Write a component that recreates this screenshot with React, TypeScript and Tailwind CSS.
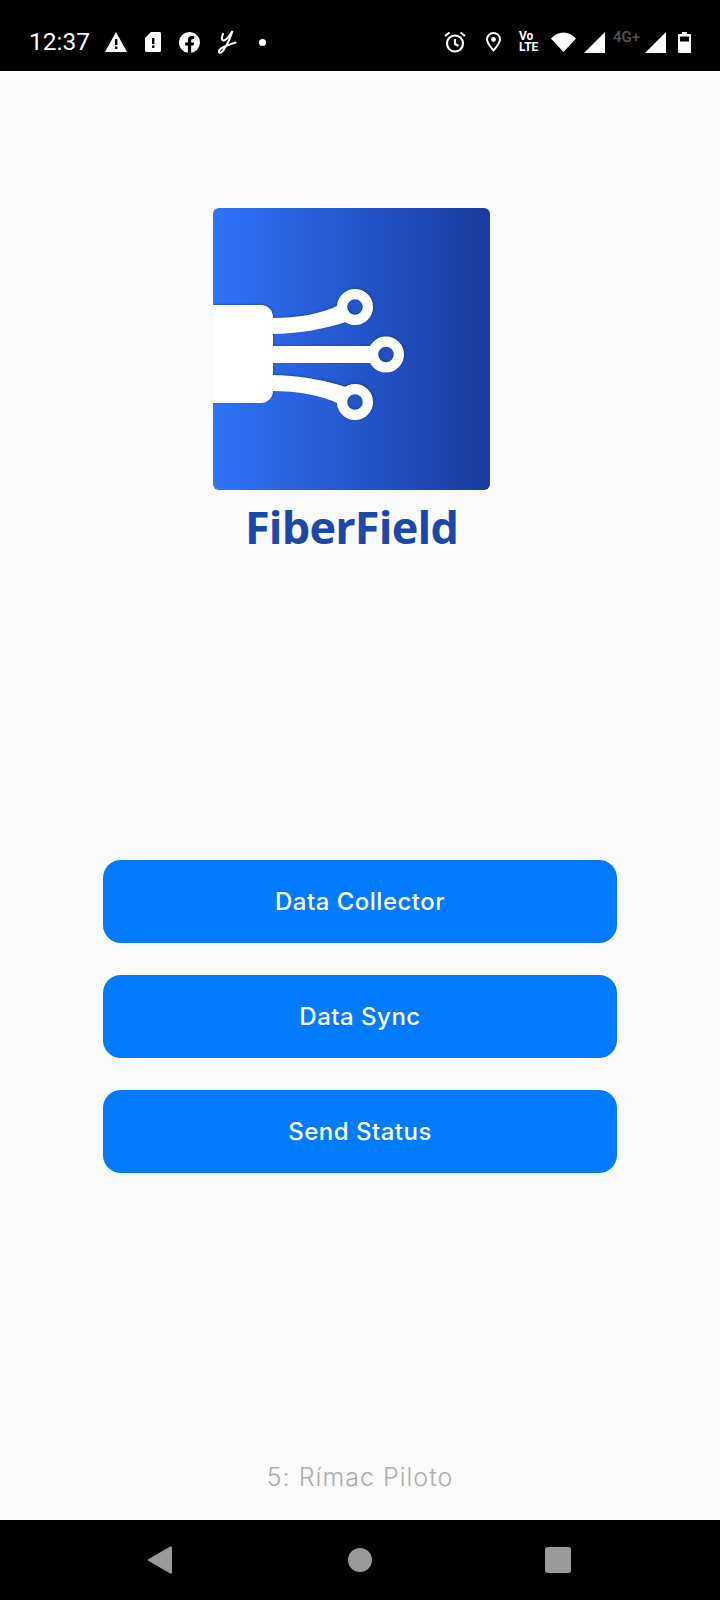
const buttons = ["Data Collector", "Data Sync", "Send Status"];

function WarningIcon() {
  return (
    <svg width="22" height="20" viewBox="0 0 22 20">
      <path d="M11 0 22 20H0Z" fill="#fff" />
      <rect x="10" y="7" width="2.4" height="6" fill="#000" />
      <rect x="10" y="14.5" width="2.4" height="2.4" fill="#000" />
    </svg>
  );
}

function SimIcon() {
  return (
    <svg width="16" height="20" viewBox="0 0 16 20">
      <path d="M6 0h8.5A1.5 1.5 0 0 1 16 1.5v17a1.5 1.5 0 0 1-1.500 1.500H1.500A1.500 1.500 0 0 1 0 18.500V6Z" fill="#fff" />
      <rect x="7" y="6" width="2.400" height="6" fill="#000" />
      <rect x="7" y="13.500" width="2.400" height="2.400" fill="#000" />
    </svg>
  );
}

function FacebookIcon() {
  return (
    <svg width="21" height="21" viewBox="0 0 22 22">
      <path
        d="M22 11a11 11 0 1 0-12.700 10.860v-7.680H6.500V11h2.800V8.600c0-2.760 1.640-4.280 4.150-4.280 1.200 0 2.460.21 2.460.21v2.700h-1.390c-1.360 0-1.790.85-1.790 1.720V11h3.050l-.49 3.180h-2.560v7.680A11 11 0 0 0 22 11Z"
        fill="#fff"
      />
    </svg>
  );
}

function ScriptIcon() {
  return (
    <svg width="20" height="26" viewBox="0 0 20 26" fill="none" stroke="#fff" strokeWidth="2" strokeLinecap="round">
      <path d="M6 5C4.500 8 4.500 12 7 11.500 10 11 13 6 15.500 2 13.500 9 10 16 7 20.500 5 24 1.500 25 2 22 2.500 19 10 16.500 18.500 13.500" />
    </svg>
  );
}

function AlarmIcon() {
  return (
    <svg width="22" height="22" viewBox="0 0 22 22" fill="none" stroke="#fff" strokeWidth="2.200">
      <circle cx="11" cy="12.500" r="8" />
      <path d="M11 8v5l3.500 2" />
      <path d="M1 5 5.500 1.500M21 5 16.500 1.500" />
    </svg>
  );
}

function LocationIcon() {
  return (
    <svg width="15" height="20" viewBox="0 0 15 20" fill="none" stroke="#fff" strokeWidth="2">
      <path d="M7.500 18.500C4 14 1 11 1 7.500a6.500 6.500 0 0 1 13 0c0 3.500-3 6.500-6.500 11Z" />
      <circle cx="7.500" cy="7.500" r="2.400" fill="#fff" stroke="none" />
    </svg>
  );
}

function WifiIcon() {
  return (
    <svg width="25" height="20" viewBox="0 0 25 20">
      <path d="M0 6.500C3.500 2.500 8 .5 12.500.5S21.500 2.500 25 6.500L12.500 20Z" fill="#fff" />
    </svg>
  );
}

function SignalIcon() {
  return (
    <svg width="21" height="21" viewBox="0 0 21 21">
      <path d="M21 0V21H0Z" fill="#fff" />
    </svg>
  );
}

function BatteryIcon() {
  return (
    <svg width="13" height="21" viewBox="0 0 13 21">
      <path d="M4 0h5v2h3a1 1 0 0 1 1 1v17a1 1 0 0 1-1 1H1a1 1 0 0 1-1-1V3a1 1 0 0 1 1-1h3Z" fill="#fff" />
      <rect x="2" y="4.500" width="9" height="5" fill="#000" />
    </svg>
  );
}

function LogoMark() {
  return (
    <svg width="277" height="282" viewBox="0 0 277 282" className="block drop-shadow-[1px_-1px_1px_rgba(10,20,80,0.3)]">
      <path d="M0 97H48a12 12 0 0 1 12 12V183a12 12 0 0 1-12 12H0Z" fill="#fff" />
      <path d="M58 110C85 110 108 106 126 97L133 114C112 121 85 126 58 126Z" fill="#fff" />
      <path d="M58 138H162V155H58Z" fill="#fff" />
      <path d="M58 183C85 183 108 187 126 196L133 179C112 172 85 167 58 167Z" fill="#fff" />
      <g fill="none" stroke="#fff" strokeWidth="10.300">
        <circle cx="142" cy="99" r="12.900" />
        <circle cx="173" cy="146.500" r="12.900" />
        <circle cx="142" cy="194" r="12.900" />
      </g>
    </svg>
  );
}

export default function App() {
  return (
    <div className="flex h-[1600px] w-[720px] flex-col bg-[#fafafa]">
      <div className="flex h-[71px] items-center justify-between bg-black pl-[29px] pr-[29px] pt-[13px]">
        <div className="flex items-center">
          <span className="w-[60px] font-['Roboto',sans-serif] text-[24.5px] leading-none text-white">12:37</span>
          <div className="ml-[16px] flex items-center gap-[18px]">
            <WarningIcon />
            <SimIcon />
            <FacebookIcon />
            <div className="-ml-[1px]">
              <ScriptIcon />
            </div>
          </div>
          <span className="ml-[22px] h-[7px] w-[7px] rounded-full bg-white" />
        </div>
        <div className="flex items-center">
          <AlarmIcon />
          <div className="ml-[20px]">
            <LocationIcon />
          </div>
          <div className="ml-[18px] flex w-[23px] flex-col font-['Roboto',sans-serif] text-[12px] font-bold leading-[11px] text-white">
            <span>Vo</span>
            <span>LTE</span>
          </div>
          <div className="ml-[9px]">
            <WifiIcon />
          </div>
          <div className="ml-[8px]">
            <SignalIcon />
          </div>
          <span className="mb-[9px] ml-[8px] w-[28px] font-['Roboto',sans-serif] text-[15px] font-medium leading-none text-[#555]">4G+</span>
          <div className="ml-[4px]">
            <SignalIcon />
          </div>
          <div className="ml-[12px]">
            <BatteryIcon />
          </div>
        </div>
      </div>

      <main className="flex flex-1 flex-col">
        <div className="ml-[213px] mt-[137px] flex w-[277px] flex-col items-center">
          <div className="h-[282px] w-[277px] overflow-hidden rounded-[6px] bg-linear-to-r from-[#2f74fb] to-[#1a3b9f]">
            <LogoMark />
          </div>
          <h1 className="mt-[6px] font-['Open_Sans',sans-serif] text-[45px] font-bold leading-[62px] tracking-[-0.8px] text-[#1c47ab]">
            FiberField
          </h1>
        </div>

        <div className="mx-[103px] mt-[302px] flex flex-col gap-[32px]">
          {buttons.map((label) => (
            <button
              key={label}
              className="h-[83px] rounded-[18px] bg-[#007aff] font-['Inter',sans-serif] text-[24px] font-medium tracking-[0.5px] text-white"
            >
              {label}
            </button>
          ))}
        </div>

        <div className="mt-auto pb-[25px] text-center font-['Inter',sans-serif] text-[25px] font-light leading-[36px] tracking-[1px] text-[#adadad]">
          5: Rímac Piloto
        </div>
      </main>

      <div className="flex h-[80px] items-center justify-between bg-black pl-[148px] pr-[149px]">
        <svg width="24" height="28" viewBox="0 0 24 28">
          <path d="M24 1.500V26.500a1.200 1.200 0 0 1-1.800 1L.7 15a1.200 1.200 0 0 1 0-2L22.200.500A1.200 1.200 0 0 1 24 1.500Z" fill="#9a9a9a" />
        </svg>
        <span className="ml-[3px] h-[24px] w-[24px] rounded-full bg-[#9a9a9a]" />
        <span className="h-[26px] w-[26px] rounded-[3px] bg-[#9a9a9a]" />
      </div>
    </div>
  );
}
